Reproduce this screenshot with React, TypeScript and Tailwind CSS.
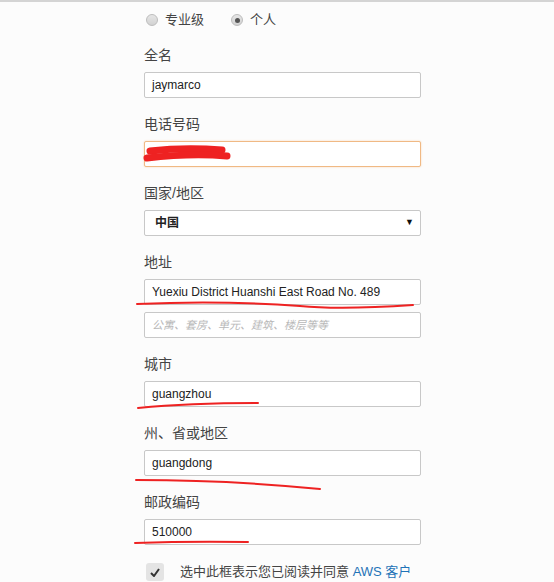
const cjk = "font-['Liberation_Sans','Noto_Sans_CJK_SC',sans-serif]";

function Label({ children, first }: { children: React.ReactNode; first?: boolean }) {
  return (
    <div className={`h-[20px] leading-[20px] text-[14px] text-[#444] mb-[7px] ${first ? 'mt-[15px]' : 'mt-[16px]'}`}>
      {children}
    </div>
  );
}

function Field({ value, placeholder, focus }: { value?: string; placeholder?: string; focus?: boolean }) {
  return (
    <div
      className={`h-[26px] w-[277px] rounded-[2px] bg-white flex items-center px-[7px] ${
        focus ? 'border border-[#f0b984] shadow-[0_0_2px_#f5d2ae]' : 'border border-[#c8c8c8]'
      }`}
    >
      {value ? (
        <span className="text-[12px] text-[#222]">{value}</span>
      ) : (
        <span className="text-[11px] text-[#b8b8b8] italic">{placeholder}</span>
      )}
    </div>
  );
}

function Radio({ checked, label }: { checked?: boolean; label: string }) {
  return (
    <div className="flex items-center gap-[7px]">
      <span className="w-[12px] h-[12px] rounded-full border border-[#bdbdbd] bg-gradient-to-b from-[#e6e6e6] to-[#d2d2d2] flex items-center justify-center">
        {checked && <span className="w-[5px] h-[5px] rounded-full bg-[#555]" />}
      </span>
      <span className="text-[13px] text-[#444]">{label}</span>
    </div>
  );
}

export default function App() {
  return (
    <div className={`relative w-[554px] h-[582px] overflow-hidden bg-[#fcfcfc] border-t-2 border-[#d4d4d4] ${cjk}`}>
      <div className="pl-[144px] pt-[8px] flex flex-col">
        <div className="h-[20px] flex items-center gap-[27px] pl-[2px]">
          <Radio label="专业级" />
          <Radio checked label="个人" />
        </div>

        <Label first>全名</Label>
        <Field value="jaymarco" />

        <Label>电话号码</Label>
        <Field focus />

        <Label>国家/地区</Label>
        <div className="h-[26px] w-[277px] rounded-[2px] bg-white border border-[#c8c8c8] flex items-center justify-between pl-[10px] pr-[6px]">
          <span className="text-[12px] font-bold text-[#222]">中国</span>
          <span className="text-[9px] text-[#111]">▼</span>
        </div>

        <Label>地址</Label>
        <Field value="Yuexiu District Huanshi East Road No. 489" />
        <div className="h-[7px]" />
        <Field placeholder="公寓、套房、单元、建筑、楼层等等" />

        <Label>城市</Label>
        <Field value="guangzhou" />

        <Label>州、省或地区</Label>
        <Field value="guangdong" />

        <Label>邮政编码</Label>
        <Field value="510000" />

        <div className="flex items-center gap-[16px] mt-[18px] pl-[2px] h-[18px]">
          <span className="w-[18px] h-[18px] rounded-[3px] bg-[#e4e4e4] flex items-center justify-center">
            <svg width="10" height="9" viewBox="0 0 10 9">
              <path d="M1 5 L4 8 L9 1" fill="none" stroke="#333" strokeWidth="2" />
            </svg>
          </span>
          <span className="text-[13px] text-[#444] whitespace-nowrap">
            选中此框表示您已阅读并同意 <span className="text-[#1f73b7]">AWS 客户</span>
          </span>
        </div>
      </div>

      <svg className="absolute inset-0 pointer-events-none" width="554" height="582">
        <g fill="none" stroke="#ee2222" strokeLinecap="round" strokeLinejoin="round">
          <path d="M150 149 Q185 145 222 148" strokeWidth="7" />
          <path d="M147 156 Q190 151 227 154" strokeWidth="7" />
          <path d="M137 302 Q220 298 300 304 Q340 308 413 303" strokeWidth="2" />
          <path d="M138 406 Q190 401 258 401" strokeWidth="2" />
          <path d="M136 478 Q230 478 320 487" strokeWidth="2" />
          <path d="M135 541 Q190 539 248 540" strokeWidth="2" />
        </g>
      </svg>
    </div>
  );
}
